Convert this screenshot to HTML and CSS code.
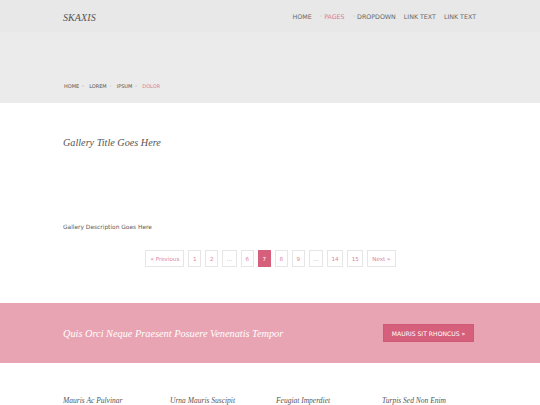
FILE: index.html
```html
<!DOCTYPE html>
<html>
<head>
<meta charset="utf-8">
<link rel="stylesheet" href="styles.css">
</head>
<body>
<header class="top">
  <div class="wrap top-inner">
    <div class="logo">SKAXIS</div>
    <nav class="nav">
      <a class="nav-link">HOME</a>
      <span class="sep"></span>
      <a class="nav-link active">PAGES</a>
      <span class="sep"></span>
      <a class="nav-link">DROPDOWN</a>
      <a class="nav-link spaced">LINK TEXT</a>
      <a class="nav-link spaced">LINK TEXT</a>
    </nav>
  </div>
</header>
<section class="band">
  <div class="wrap crumbs">
    <span>HOME</span><span class="csep"></span>
    <span>LOREM</span><span class="csep"></span>
    <span>IPSUM</span><span class="csep"></span>
    <span class="current">DOLOR</span>
  </div>
</section>
<main class="wrap content">
  <h1 class="title">Gallery Title Goes Here</h1>
  <p class="desc">Gallery Description Goes Here</p>
  <div class="pager">
    <span class="pg wide">« Previous</span>
    <span class="pg">1</span>
    <span class="pg">2</span>
    <span class="pg muted">...</span>
    <span class="pg">6</span>
    <span class="pg on">7</span>
    <span class="pg">8</span>
    <span class="pg">9</span>
    <span class="pg muted">...</span>
    <span class="pg">14</span>
    <span class="pg">15</span>
    <span class="pg wide">Next »</span>
  </div>
</main>
<section class="cta">
  <div class="wrap cta-inner">
    <div class="cta-text">Quis Orci Neque Praesent Posuere Venenatis Tempor</div>
    <a class="cta-btn">MAURIS SIT RHONCUS »</a>
  </div>
</section>
<footer class="wrap foot">
  <div class="col">Mauris Ac Pulvinar</div>
  <div class="col">Urna Mauris Suscipit</div>
  <div class="col">Feugiat Imperdiet</div>
  <div class="col">Turpis Sed Non Enim</div>
</footer>
</body>
</html>
```
FILE: styles.css
```css
html, body { margin: 0; padding: 0; }
body {
  background: #fff;
  font-family: "DejaVu Sans", Verdana, sans-serif;
  color: #555;
  width: 540px;
  overflow: hidden;
}
.wrap { width: 414px; margin: 0 auto; box-sizing: border-box; }

.top { background: #e8e8e8; height: 32px; }
.top-inner { display: flex; align-items: center; justify-content: space-between; height: 32px; }
.logo {
  font-family: "Liberation Serif", serif;
  font-style: italic;
  font-size: 10px;
  color: #555;
  letter-spacing: 0.1px;
  padding-top: 2px;
}
.nav { display: flex; align-items: center; padding-right: 1px; }
.nav-link { font-size: 6.3px; color: #666; }
.nav-link.spaced { margin-left: 8px; }
.nav-link.active { color: #d87a94; }
.sep { width: 1.5px; height: 2px; background: #dedede; margin-left: 8.5px; margin-right: 2.5px; }

.band { background: #ebebeb; height: 71px; }
.crumbs { display: flex; align-items: center; padding-top: 51px; font-size: 5px; color: #555; padding-left: 1px; }
.csep { width: 1.5px; height: 2px; background: #dcdcdc; margin: 0 5.5px 0 3px; }
.crumbs .current { color: #d87a94; }

.content { padding-top: 33px; height: 200px; }
.title {
  margin: 0;
  font-family: "Liberation Serif", serif;
  font-style: italic;
  font-weight: normal;
  font-size: 10.2px;
  color: #555;
  line-height: 14px;
}
.desc { margin: 73px 0 0; font-size: 5.9px; color: #5a5a5a; line-height: 8px; }

.pager { display: flex; justify-content: center; gap: 4px; margin-top: 19px; padding-left: 1px; }
.pg {
  box-sizing: border-box;
  height: 17px;
  min-width: 13px;
  padding: 0 3.5px;
  border: 1px solid #e6e6e6;
  display: flex; align-items: center; justify-content: center;
  font-size: 5.6px;
  color: #dc849b;
}
.pg.muted { color: #aaa; }
.pg.wide { padding: 0 4px; }
.pg.on { background: #d65f7c; border-color: #d65f7c; color: #fff; }

.cta { background: #e8a4b2; height: 60px; }
.cta-inner { display: flex; align-items: center; justify-content: space-between; height: 60px; padding-right: 3px; }
.cta-text {
  font-family: "Liberation Serif", serif;
  font-style: italic;
  font-size: 10.3px;
  color: #fff;
}
.cta-btn {
  box-sizing: border-box;
  width: 91px; height: 18px;
  background: #d65f7c;
  border: 1px solid #cf5a77;
  color: #fff;
  font-size: 6.1px;
  display: flex; align-items: center; justify-content: center;
}

.foot { display: grid; grid-template-columns: 107px 106px 106px 95px; padding-top: 33px; }
.col {
  font-family: "Liberation Serif", serif;
  font-style: italic;
  font-size: 7.5px;
  color: #555;
}
```
